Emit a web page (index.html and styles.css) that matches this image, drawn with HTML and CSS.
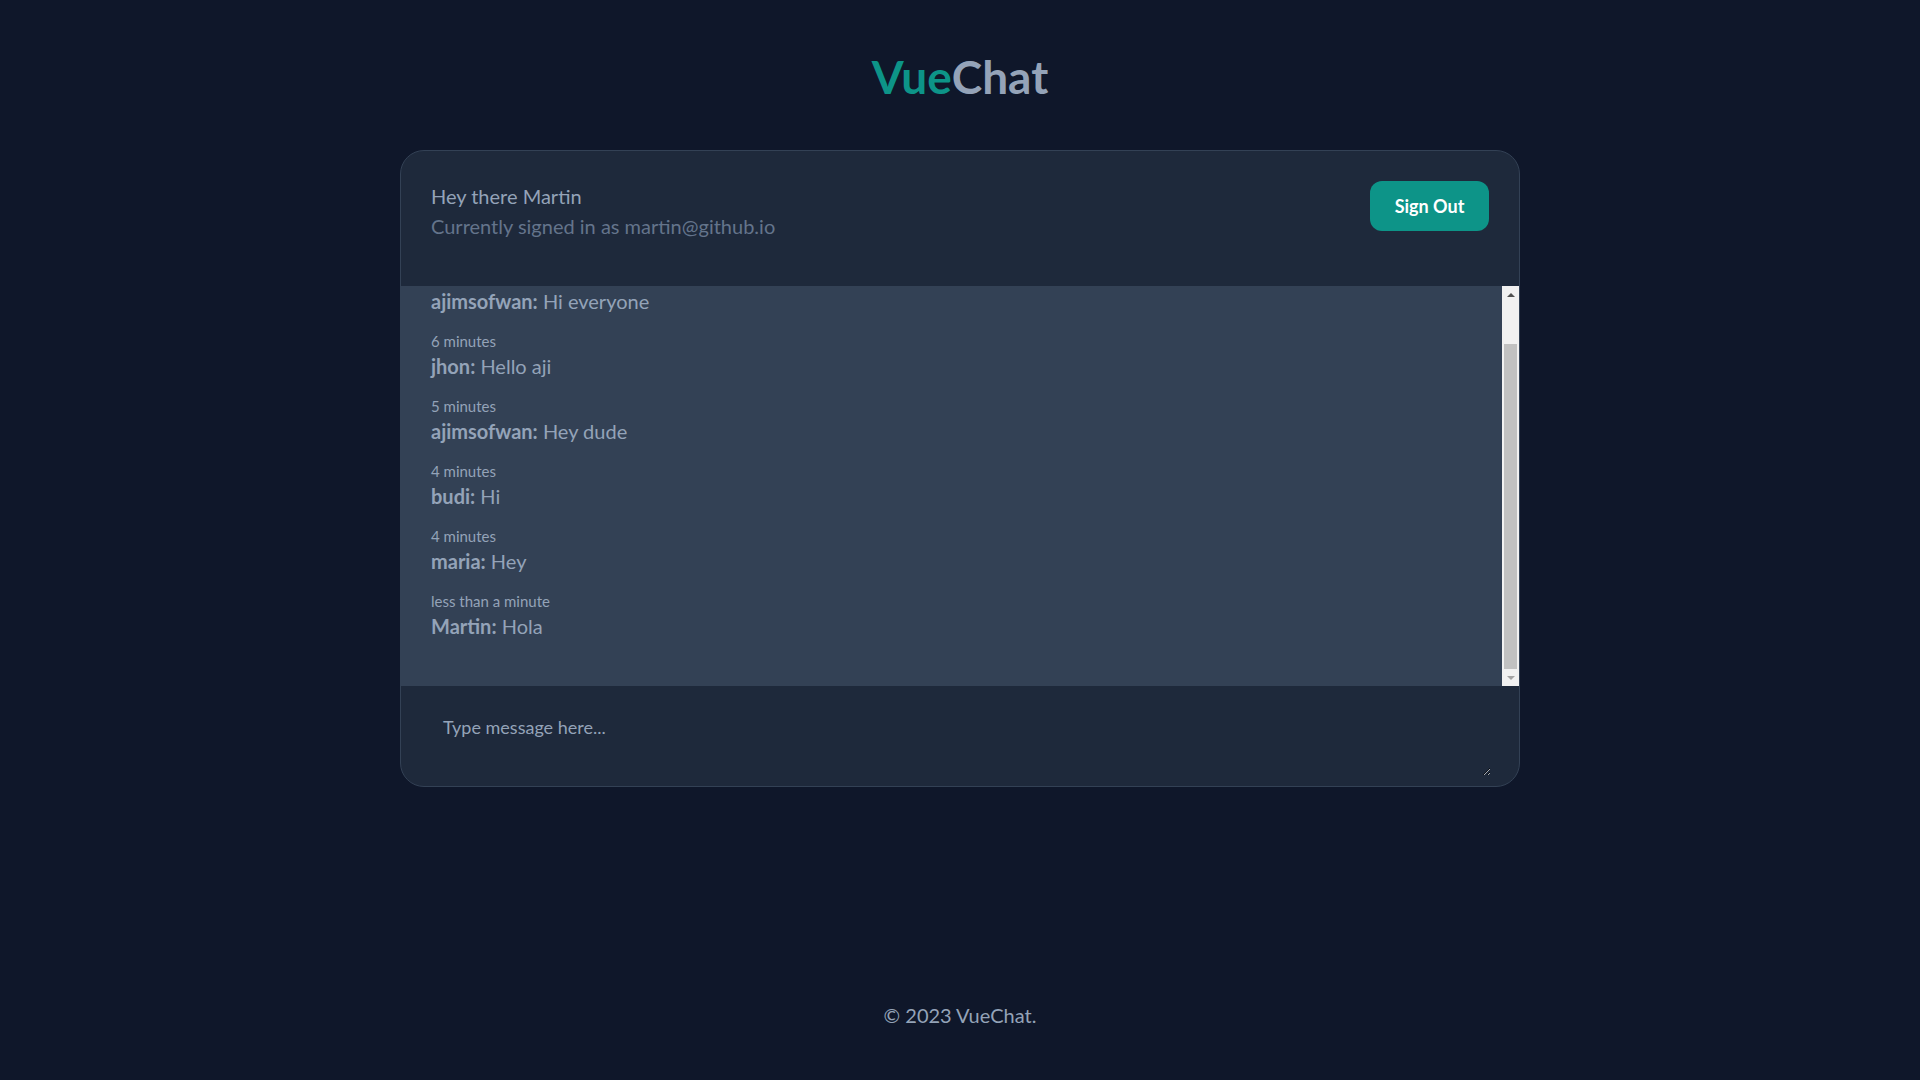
FILE: index.html
```html
<!DOCTYPE html>
<html lang="en">
<head>
<meta charset="utf-8">
<title>VueChat</title>
<link rel="stylesheet" href="styles.css">
</head>
<body>
<div class="app">
  <header class="top">
    <h1 class="logo"><span class="logo-vue">Vue</span><span class="logo-chat">Chat</span></h1>
  </header>
  <main class="main">
    <section class="card">
      <div class="card-head">
        <div class="user">
          <p class="greet">Hey there Martin</p>
          <p class="signed">Currently signed in as martin@github.io</p>
        </div>
        <button class="signout">Sign Out</button>
      </div>
      <div class="messages">
        <div class="list">
          <div class="msg">
            <div class="text"><strong>ajimsofwan:</strong> Hi everyone</div>
          </div>
          <div class="msg">
            <div class="time">6 minutes</div>
            <div class="text"><strong>jhon:</strong> Hello aji</div>
          </div>
          <div class="msg">
            <div class="time">5 minutes</div>
            <div class="text"><strong>ajimsofwan:</strong> Hey dude</div>
          </div>
          <div class="msg">
            <div class="time">4 minutes</div>
            <div class="text"><strong>budi:</strong> Hi</div>
          </div>
          <div class="msg">
            <div class="time">4 minutes</div>
            <div class="text"><strong>maria:</strong> Hey</div>
          </div>
          <div class="msg">
            <div class="time">less than a minute</div>
            <div class="text"><strong>Martin:</strong> Hola</div>
          </div>
        </div>
        <div class="scrollbar">
          <div class="sb-btn"><span class="arrow-up"></span></div>
          <div class="sb-track"><div class="sb-thumb"></div></div>
          <div class="sb-btn"><span class="arrow-down"></span></div>
        </div>
      </div>
      <div class="composer">
        <textarea class="input" placeholder="Type message here..."></textarea>
      </div>
    </section>
  </main>
  <footer class="foot">© 2023 VueChat.</footer>
</div>
</body>
</html>
```

FILE: styles.css
```css
* { box-sizing: border-box; }
html, body { margin: 0; padding: 0; }
body {
  background: #0f172a;
  color: #94a3b8;
  font-family: Lato, "Segoe UI", "Noto Sans", sans-serif;
}
.app {
  min-height: 100vh;
  display: flex;
  flex-direction: column;
}
.top {
  padding-top: 52px;
  display: flex;
  justify-content: center;
}
.logo {
  margin: 0 0 48px;
  font-size: 46px;
  line-height: 50px;
  font-weight: 700;
}
.logo-vue { color: #0d9488; }
.logo-chat { color: #94a3b8; }
.main {
  flex: 1;
  display: flex;
  justify-content: center;
}
.card {
  width: 1120px;
  height: 637px;
  background: #1e293b;
  border: 1px solid #334155;
  border-radius: 24px;
  overflow: hidden;
  display: flex;
  flex-direction: column;
}
.card-head {
  height: 135px;
  padding: 30px 30px 0 30px;
  display: flex;
  justify-content: space-between;
  align-items: flex-start;
}
.greet, .signed {
  margin: 0;
  font-size: 20px;
  line-height: 30px;
}
.greet { color: #94a3b8; }
.signed { color: #64748b; }
.signout {
  background: #0d9488;
  color: #ffffff;
  border: none;
  border-radius: 12px;
  font-family: inherit;
  font-weight: 700;
  font-size: 18px;
  line-height: 28px;
  padding: 11px 24px;
  width: 119px;
}
.messages {
  height: 400px;
  background: #334155;
  display: flex;
}
.list {
  flex: 1;
  overflow: hidden;
  display: flex;
  flex-direction: column;
  justify-content: flex-end;
  padding: 0 30px 30px;
}
.msg { margin-bottom: 16px; flex-shrink: 0; }
.time {
  font-size: 15px;
  line-height: 21px;
}
.text {
  font-size: 20px;
  line-height: 28px;
}
.text strong { font-weight: 700; }
.scrollbar {
  width: 17px;
  background: #f1f1f1;
  display: flex;
  flex-direction: column;
}
.sb-btn {
  height: 17px;
  display: flex;
  align-items: center;
  justify-content: center;
}
.arrow-up {
  width: 0; height: 0;
  border-left: 4px solid transparent;
  border-right: 4px solid transparent;
  border-bottom: 4px solid #505050;
}
.arrow-down {
  width: 0; height: 0;
  border-left: 4px solid transparent;
  border-right: 4px solid transparent;
  border-top: 4px solid #a3a3a3;
}
.sb-track {
  flex: 1;
  display: flex;
  flex-direction: column;
  justify-content: flex-end;
  padding: 0 2px;
}
.sb-thumb {
  height: 325px;
  background: #c1c1c1;
}
.composer {
  flex: 1;
  padding: 16px 28px 0 31px;
}
.input {
  display: block;
  width: 100%;
  height: 74px;
  padding: 13px 11px 11px;
  background: transparent;
  border: none;
  outline: none;
  resize: vertical;
  color: #94a3b8;
  color-scheme: dark;
  font-family: inherit;
  font-size: 18px;
  line-height: 24px;
}
.input::placeholder { color: #94a3b8; opacity: 1; }
.foot {
  text-align: center;
  font-size: 20px;
  line-height: 28px;
  padding-bottom: 51px;
}
```
